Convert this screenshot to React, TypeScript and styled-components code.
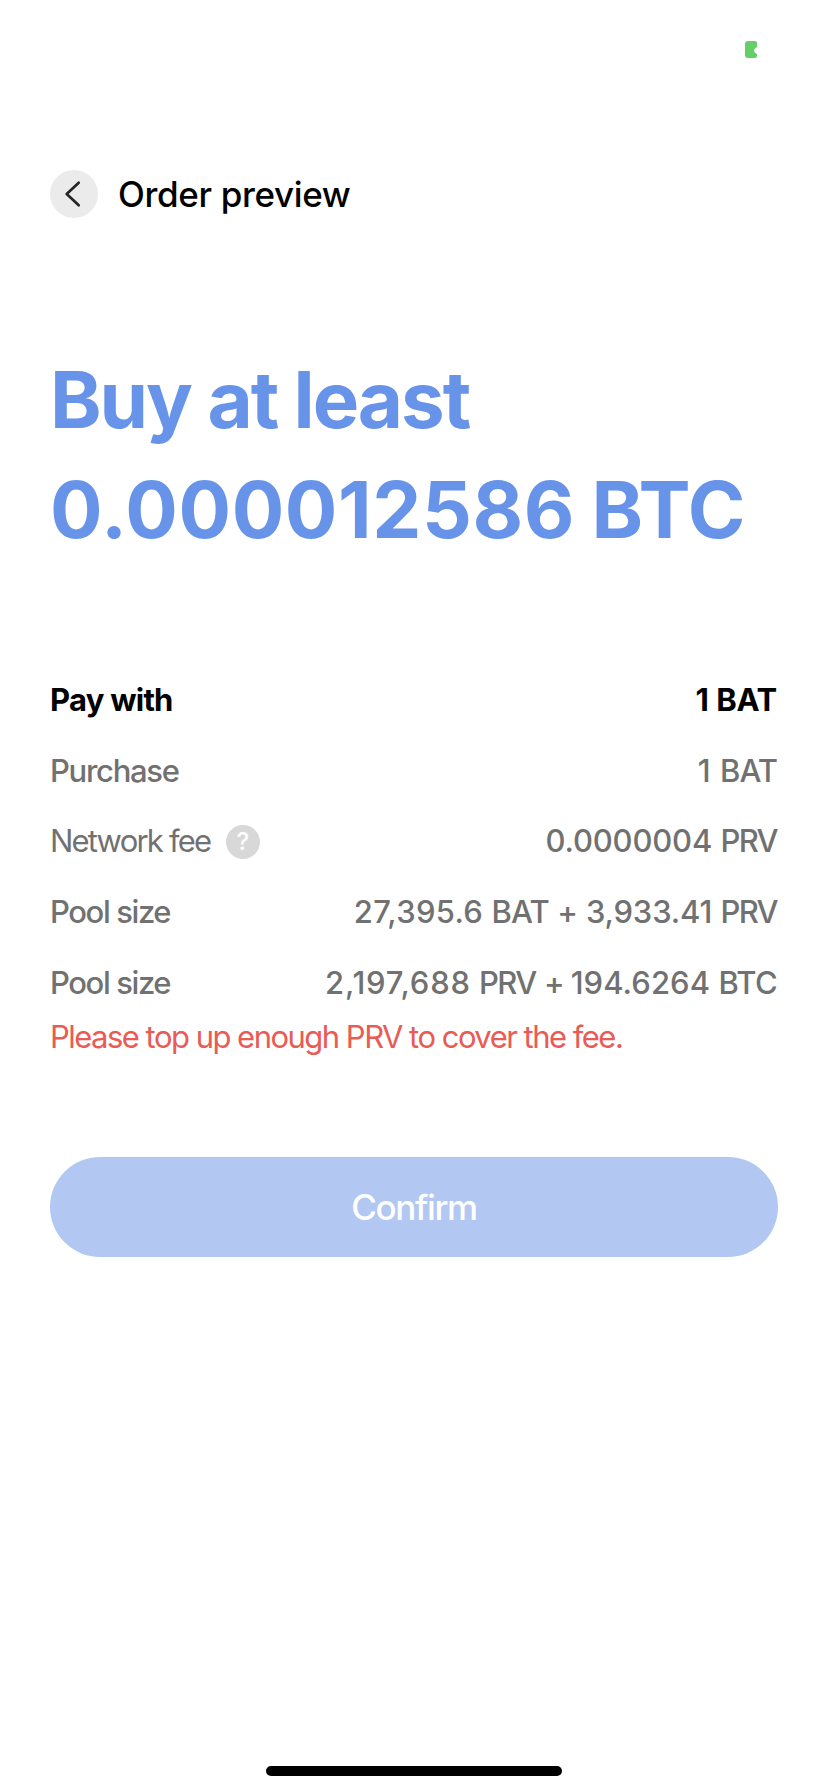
import React from "react";
import styled, { createGlobalStyle } from "styled-components";

const GlobalStyle = createGlobalStyle`
  * { box-sizing: border-box; }
  body { margin: 0; background: #fff; font-family: Inter, "Liberation Sans", sans-serif; }
`;

const Screen = styled.div`
  display: flex;
  flex-direction: column;
  width: 828px;
  height: 1792px;
  padding: 0 50px;
  background: #fff;
`;

const StatusBar = styled.div`
  display: flex;
  justify-content: flex-end;
  height: 170px;
  padding: 41px 21px 0 0;
`;

const Header = styled.header`
  display: flex;
  align-items: center;
  height: 48px;
`;

const BackButton = styled.button`
  display: flex;
  width: 48px;
  height: 48px;
  padding: 0;
  border: 0;
  border-radius: 50%;
  background: #ebebeb;
`;

const Label = styled.span<{ $track?: number; $weight?: number }>`
  font-weight: ${(p) => p.$weight ?? 400};
  letter-spacing: ${(p) => p.$track ?? 0}px;
  white-space: nowrap;
`;

const Title = styled.h1`
  margin: 0 0 0 20px;
  font-size: 35px;
  line-height: 48px;
  color: #000;
`;

const Amount = styled.h2`
  display: flex;
  flex-direction: column;
  margin: 127px 0 99.5px;
  font-size: 78px;
  line-height: 110px;
  color: #6793e9;
`;

const Rows = styled.div`
  display: flex;
  flex-direction: column;
`;

const Row = styled.div<{ $strong?: boolean }>`
  display: flex;
  align-items: center;
  justify-content: space-between;
  height: 70.7px;
  font-size: 31px;
  line-height: 38px;
  font-weight: ${(p) => (p.$strong ? 700 : 500)};
  color: ${(p) => (p.$strong ? "#000" : "#717171")};
`;

const LabelGroup = styled.div`
  display: flex;
  align-items: center;
  gap: 15.5px;
`;

const Value = styled.div`
  padding-right: 1px;
  white-space: nowrap;
`;

const Token = styled.span<{ $track: number }>`
  letter-spacing: ${(p) => p.$track}px;
`;

const Help = styled.span`
  display: flex;
  align-items: center;
  justify-content: center;
  width: 34px;
  height: 34px;
  margin-top: 1px;
  border-radius: 50%;
  background: #d8d8d8;
  color: #fff;
  font-size: 24px;
  font-weight: 500;
  line-height: 34px;
`;

const ErrorText = styled.div`
  height: 38px;
  font-size: 31px;
  line-height: 38px;
  color: #ea5b55;
`;

const Confirm = styled.button`
  height: 100px;
  margin-top: 101px;
  padding: 0;
  border: 0;
  border-radius: 50px;
  background: #b2c8f2;
  color: #fff;
  font-family: inherit;
  font-size: 35px;
  line-height: 100px;
`;

const HomeIndicator = styled.div`
  width: 296px;
  height: 10px;
  margin: auto auto 16px;
  border-radius: 5px;
  background: #000;
`;

type Piece = [text: string, track: number];
type RowData = { label: Piece; weight: number; value: Piece[]; strong?: boolean; help?: boolean };

const rows: RowData[] = [
  { label: ["Pay with", -0.75], weight: 700, value: [["1", 0], ["BAT", -0.3]], strong: true },
  { label: ["Purchase", -1.3], weight: 500, value: [["1", 1.2], ["BAT", -1]] },
  { label: ["Network fee", -1.8], weight: 400, value: [["0.0000004", -0.17], ["PRV", -1.6]], help: true },
  {
    label: ["Pool size", -1.4],
    weight: 500,
    value: [["27,395.6", 0.3], ["BAT", -0.8], ["+", -0.3], ["3,933.41", -0.15], ["PRV", -1.6]],
  },
  {
    label: ["Pool size", -1.4],
    weight: 500,
    value: [["2,197,688", 0.8], ["PRV", -1.6], ["+", -2.3], ["194.6264", 0.1], ["BTC", -0.7]],
  },
];

const Tokens = ({ pieces }: { pieces: Piece[] }) => (
  <>
    {pieces.map(([text, track], i) => (
      <React.Fragment key={i}>
        {i > 0 && " "}
        <Token $track={track}>{text}</Token>
      </React.Fragment>
    ))}
  </>
);

export default function App() {
  return (
    <>
      <GlobalStyle />
      <Screen>
        <StatusBar>
          <svg width="12" height="17" viewBox="0 0 12 17">
            <path d="M3 0H10Q12 0 12 2V6Q9 7.5 9 9.5T12 13V15Q12 17 10 17H3Q0 17 0 14V3Q0 0 3 0Z" fill="#65cf67" />
          </svg>
        </StatusBar>
        <Header>
          <BackButton aria-label="Back">
            <svg width="48" height="48" viewBox="0 0 48 48" fill="none">
              <path d="M28.7 12.7L16.7 24L28.7 35.3" stroke="#262626" strokeWidth="2.7" strokeLinecap="round" strokeLinejoin="round" />
            </svg>
          </BackButton>
          <Title><Label $weight={500} $track={-0.35}>Order preview</Label></Title>
        </Header>
        <Amount>
          <Label $weight={700} $track={-2.05}>Buy at least</Label>
          <Label $weight={700} $track={-2}>
            <Tokens pieces={[["0.000012586", 0.6], ["BTC", -0.3]]} />
          </Label>
        </Amount>
        <Rows>
          {rows.map((r, i) => (
            <Row key={i} $strong={r.strong}>
              <LabelGroup>
                <Label $weight={r.weight} $track={r.label[1]}>{r.label[0]}</Label>
                {r.help && <Help>?</Help>}
              </LabelGroup>
              <Value><Tokens pieces={r.value} /></Value>
            </Row>
          ))}
        </Rows>
        <ErrorText><Label $track={-1.52}>Please top up enough PRV to cover the fee.</Label></ErrorText>
        <Confirm><Label $weight={500} $track={-1.4}>Confirm</Label></Confirm>
        <HomeIndicator />
      </Screen>
    </>
  );
}
